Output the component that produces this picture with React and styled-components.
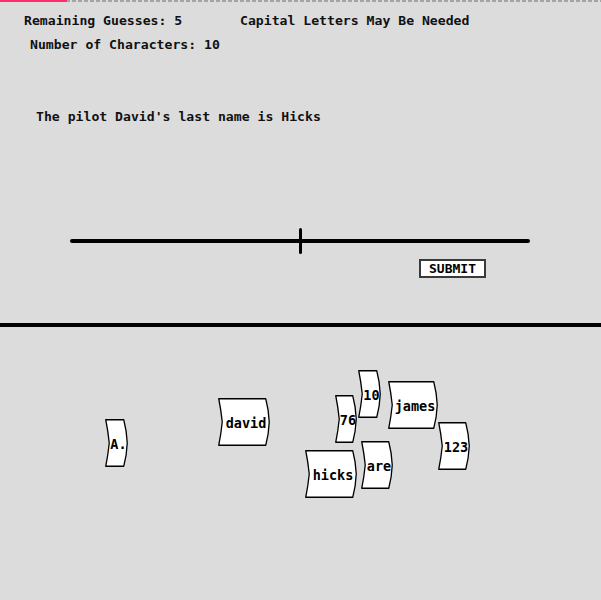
import styled, { createGlobalStyle } from 'styled-components';

const GlobalStyle = createGlobalStyle`
  html, body {
    margin: 0;
    padding: 0;
    background: #dcdcdc;
  }
  body {
    font-family: "DejaVu Sans Mono", "Liberation Mono", monospace;
    font-weight: bold;
    font-size: 13.15px;
    color: #111;
  }
`;

const Page = styled.div`
  width: 601px;
  height: 600px;
  display: flex;
  flex-direction: column;
  overflow: hidden;
`;

const Progress = styled.div`
  height: 2px;
  display: flex;
  background: repeating-linear-gradient(90deg, #a3a3a3 0 4px, transparent 4px 6px);
`;

const ProgressFill = styled.div`
  height: 100%;
  background: #ff2d6b;
`;

const Board = styled.div`
  height: 321px;
  display: flex;
  flex-direction: column;
`;

const Header = styled.div`
  padding: 7px 0 0 24px;
  line-height: 24px;
`;

const HeaderRow = styled.div`
  display: flex;
  padding-left: ${p => p.$indent || 0}px;
`;

const Stat = styled.span`
  width: ${p => (p.$width ? `${p.$width}px` : 'auto')};
  white-space: pre;
`;

const Clue = styled.p`
  margin: 48px 0 0 36px;
  line-height: 24px;
`;

const SliderRow = styled.div`
  margin: 99px 0 0 70px;
  width: 460px;
  height: 26px;
  display: flex;
  align-items: center;
  position: relative;
`;

const Track = styled.div`
  flex: 1;
  height: 4px;
  border-radius: 2px;
  background: #000;
`;

const Thumb = styled.div`
  position: absolute;
  left: ${p => p.$pos}%;
  top: 0;
  width: 3px;
  height: 26px;
  margin-left: -1px;
  border-radius: 2px;
  background: #000;
`;

const SubmitButton = styled.button`
  align-self: flex-start;
  margin: 5px 0 0 419px;
  width: 67px;
  height: 19px;
  padding: 0;
  border: 2px solid #3a3a3a;
  background: #fff;
  font: inherit;
  font-size: 13px;
  line-height: 14px;
  color: #000;
`;

const Divider = styled.div`
  height: 4px;
  background: #000;
`;

const Canvas = styled.div`
  position: relative;
  flex: 1;
`;

const TileBox = styled.div`
  position: absolute;
  left: ${p => p.$x}px;
  top: ${p => p.$y}px;
  width: ${p => p.$w}px;
  height: 48px;
  display: flex;
  align-items: center;
  justify-content: center;
  padding-left: 4px;
  box-sizing: border-box;
  font-size: 13.5px;
  color: #000;
`;

const TileShape = styled.svg`
  position: absolute;
  inset: 0;
  overflow: visible;
`;

const TileLabel = styled.span`
  position: relative;
  top: 1px;
  white-space: pre;
`;

const tiles = [
  { text: 'david', x: 218, y: 71, w: 52 },
  { text: 'A.', x: 105, y: 92, w: 23 },
  { text: '76', x: 335, y: 68, w: 22 },
  { text: '10', x: 358, y: 43, w: 23 },
  { text: 'james', x: 388, y: 54, w: 50 },
  { text: '123', x: 438, y: 95, w: 32 },
  { text: 'are', x: 361, y: 114, w: 32 },
  { text: 'hicks', x: 305, y: 123, w: 52 },
];

function Tile({ text, x, y, w }) {
  const h = 48;
  const b = 3.5;
  const e = 0.75;
  const m = h / 2;
  // chevron outline: notched left side, pointed right side, edges slightly bowed
  const d = [
    `M${e},${e}`,
    `L${w - b - e},${e}`,
    `Q${w - b * 0.35},${m * 0.5} ${w - e},${m}`,
    `Q${w - b * 0.35},${m * 1.5} ${w - b - e},${h - e}`,
    `L${e},${h - e}`,
    `Q${b * 0.65 + e},${m * 1.5} ${b + e},${m}`,
    `Q${b * 0.65 + e},${m * 0.5} ${e},${e}`,
    'Z',
  ].join(' ');
  return (
    <TileBox $x={x} $y={y} $w={w}>
      <TileShape width={w} height={h}>
        <path d={d} fill="#fff" stroke="#000" strokeWidth="1.3" strokeLinejoin="round" />
      </TileShape>
      <TileLabel>{text}</TileLabel>
    </TileBox>
  );
}

export default function App() {
  return (
    <Page>
      <GlobalStyle />
      <Progress>
        <ProgressFill style={{ width: '67px' }} />
      </Progress>
      <Board>
        <Header>
          <HeaderRow>
            <Stat $width={216}>Remaining Guesses: 5</Stat>
            <Stat>Capital Letters May Be Needed</Stat>
          </HeaderRow>
          <HeaderRow $indent={6}>
            <Stat>Number of Characters: 10</Stat>
          </HeaderRow>
        </Header>
        <Clue>The pilot David's last name is Hicks</Clue>
        <SliderRow>
          <Track />
          <Thumb $pos={50} />
        </SliderRow>
        <SubmitButton>SUBMIT</SubmitButton>
      </Board>
      <Divider />
      <Canvas>
        {tiles.map(t => (
          <Tile key={t.text} {...t} />
        ))}
      </Canvas>
    </Page>
  );
}
